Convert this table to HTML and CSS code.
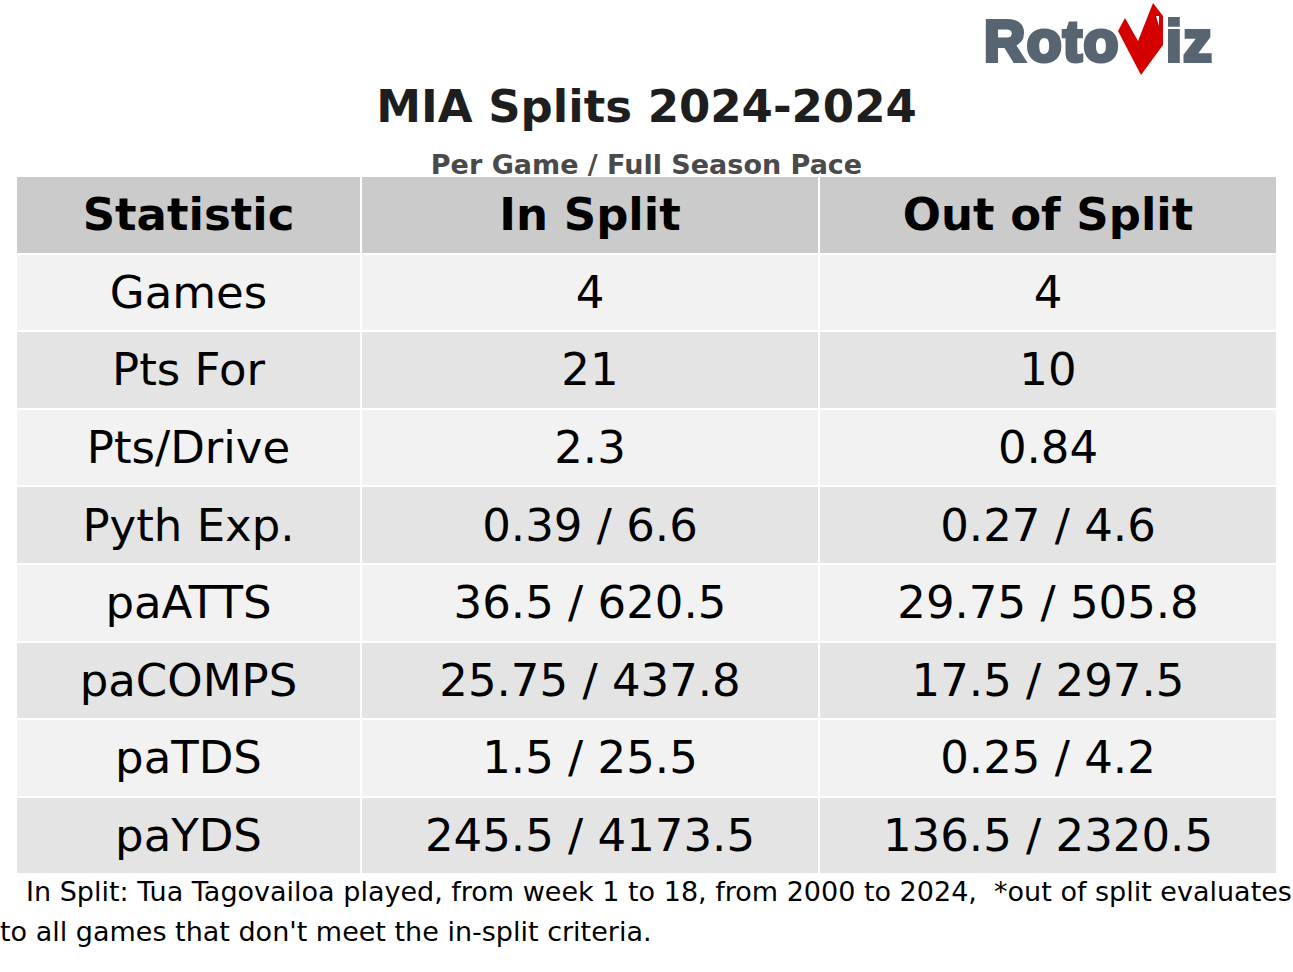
FILE: index.html
```html
<!DOCTYPE html>
<html>
<head>
<meta charset="utf-8">
<link rel="stylesheet" href="styles.css">
</head>
<body>
<div class="page">
  <div class="logo-row">
    <svg class="logo" width="232" height="80" viewBox="0 0 232 80" xmlns="http://www.w3.org/2000/svg">
      <text class="logo-text" x="0" y="61">Roto</text>
      <polygon class="logo-v" points="134,31 141,18 154,41 169,3 179,16 179,45 157,75"/>
      <polygon class="logo-notch" points="172,16 175,16 175,26"/>
      <text class="logo-text" x="182" y="61">iz</text>
    </svg>
  </div>
  <h1 class="title">MIA Splits 2024-2024</h1>
  <div class="subtitle">Per Game / Full Season Pace</div>
  <div class="table">
    <div class="cell head">Statistic</div>
    <div class="cell head">In Split</div>
    <div class="cell head">Out of Split</div>

    <div class="cell light">Games</div>
    <div class="cell light">4</div>
    <div class="cell light">4</div>

    <div class="cell dark">Pts For</div>
    <div class="cell dark">21</div>
    <div class="cell dark">10</div>

    <div class="cell light">Pts/Drive</div>
    <div class="cell light">2.3</div>
    <div class="cell light">0.84</div>

    <div class="cell dark">Pyth Exp.</div>
    <div class="cell dark">0.39 / 6.6</div>
    <div class="cell dark">0.27 / 4.6</div>

    <div class="cell light">paATTS</div>
    <div class="cell light">36.5 / 620.5</div>
    <div class="cell light">29.75 / 505.8</div>

    <div class="cell dark">paCOMPS</div>
    <div class="cell dark">25.75 / 437.8</div>
    <div class="cell dark">17.5 / 297.5</div>

    <div class="cell light">paTDS</div>
    <div class="cell light">1.5 / 25.5</div>
    <div class="cell light">0.25 / 4.2</div>

    <div class="cell dark">paYDS</div>
    <div class="cell dark">245.5 / 4173.5</div>
    <div class="cell dark">136.5 / 2320.5</div>
  </div>
  <div class="footer">
    <div class="line first">In Split: Tua Tagovailoa played, from week 1 to 18, from 2000 to 2024,&nbsp; *out of split evaluates</div>
    <div class="line">to all games that don't meet the in-split criteria.</div>
  </div>
</div>
</body>
</html>
```
FILE: styles.css
```css
html, body {
  margin: 0;
  padding: 0;
  background: #ffffff;
}

.page {
  width: 1293px;
  height: 972px;
  overflow: hidden;
  font-family: "DejaVu Sans", sans-serif;
  color: #000;
}

.logo-row {
  height: 81px;
  display: flex;
  justify-content: flex-end;
  padding-right: 77px;
}

.logo {
  display: block;
}

.logo-text {
  font-family: "Liberation Sans", Arial, sans-serif;
  font-weight: 700;
  font-size: 57px;
  letter-spacing: 1.5px;
  fill: #566571;
  stroke: #566571;
  stroke-width: 4px;
  stroke-linejoin: miter;
}

.logo-v {
  fill: #d40000;
}

.logo-notch {
  fill: #ffffff;
}

.title {
  margin: 0;
  height: 52px;
  font-size: 45px;
  line-height: 52px;
  font-weight: 700;
  text-align: center;
  color: #1e1e1e;
}

.subtitle {
  margin-top: 19px;
  font-size: 27px;
  line-height: 26px;
  font-weight: 700;
  text-align: center;
  color: #4a4a4a;
}

.table {
  margin-top: -1px;
  margin-left: 17px;
  width: 1259px;
  display: grid;
  grid-template-columns: 343px 456px 456px;
  grid-auto-rows: 75.6px;
  gap: 2px;
  background: #ffffff;
}

.cell {
  display: flex;
  align-items: center;
  justify-content: center;
  font-size: 45px;
  white-space: nowrap;
}

.head {
  background: #cbcbcb;
  font-weight: 700;
}

.light {
  background: #f2f2f2;
}

.dark {
  background: #e4e4e4;
}

.footer {
  margin-top: -1px;
  font-size: 27px;
  line-height: 40px;
}

.line {
  white-space: nowrap;
}

.first {
  padding-left: 26px;
}
```
